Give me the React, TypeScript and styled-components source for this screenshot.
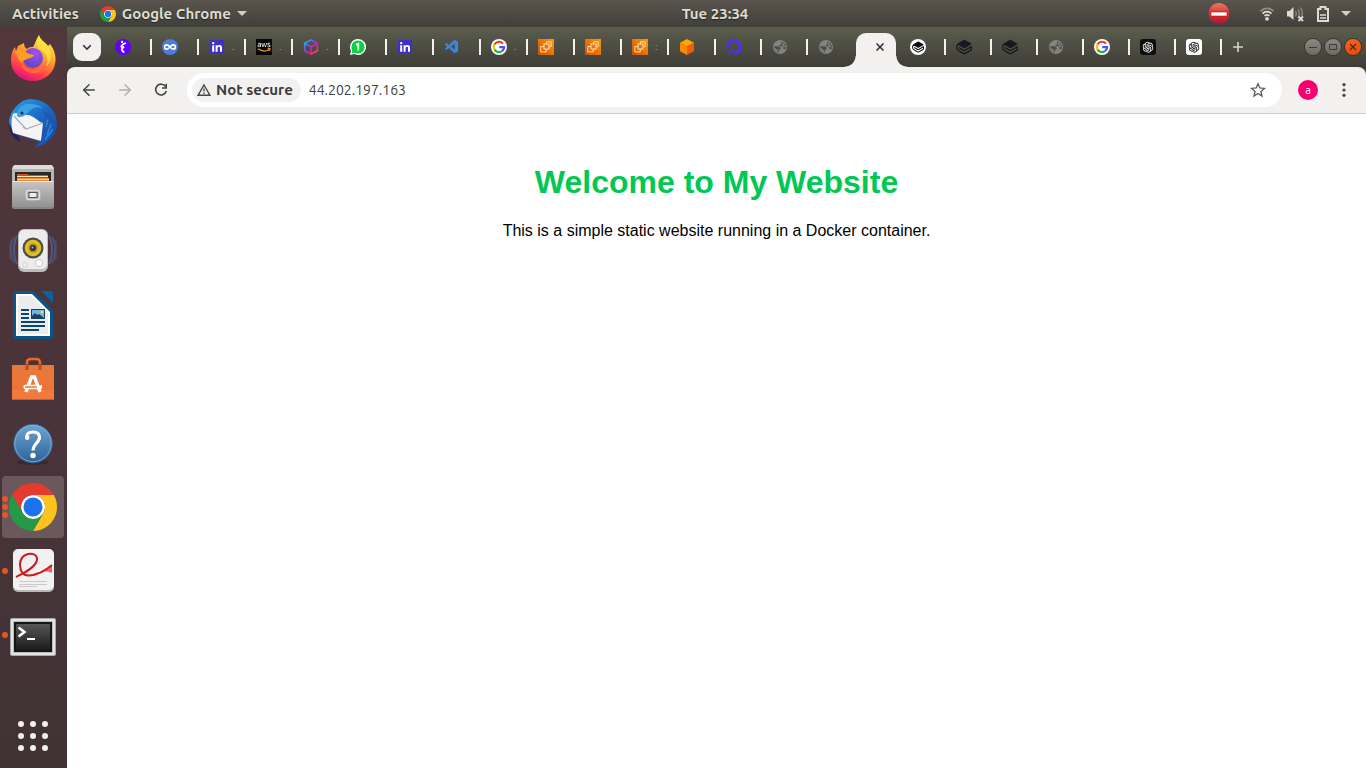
import React from 'react';
import styled, { createGlobalStyle } from 'styled-components';
import { FaAws, FaDigitalOcean } from 'react-icons/fa';
import { SiGitbook } from 'react-icons/si';
import { VscVscode } from 'react-icons/vsc';
import { AiOutlineOpenAI } from 'react-icons/ai';
import { Infinity as InfinityMark, ArrowLeft, ArrowRight } from 'lucide-react';

const GlobalStyle = createGlobalStyle`
  * { box-sizing: border-box; }
  body { margin: 0; background: #fff; }
  button { border: 0; padding: 0; margin: 0; background: none; color: inherit; font: inherit; cursor: pointer; }
  svg { display: block; }
`;

const uiFont = `'Ubuntu', 'Noto Sans', 'Open Sans', sans-serif`;

/* ---------- layout ---------- */

const Desktop = styled.div`
  display: flex;
  flex-direction: column;
  min-height: 100vh;
  font-family: ${uiFont};
`;

const TopBar = styled.header`
  display: flex;
  align-items: center;
  height: 27px;
  background: linear-gradient(#5a554d, #403f3a);
  color: #dfdbd2;
  font-size: 15px;
  font-weight: 600;
  line-height: 20px;
  text-shadow: 0 1px 1px #26241f;
`;

const TopSide = styled.div<{ $end?: boolean }>`
  display: flex;
  flex: 1 1 0;
  align-items: center;
  justify-content: ${(p) => (p.$end ? 'flex-end' : 'flex-start')};
  padding: ${(p) => (p.$end ? '0 15px 0 0' : '0 0 0 12px')};
`;

const TopButton = styled.button`
  display: flex;
  align-items: center;
  gap: 6px;
  margin-right: 21px;
  text-shadow: inherit;
  white-space: nowrap;
`;

const Clock = styled.button`
  padding-left: 67px;
  text-shadow: inherit;
  white-space: nowrap;
`;

const StatusIcon = styled.button<{ $gap: number }>`
  margin-left: ${(p) => p.$gap}px;
`;

const Workspace = styled.div`
  display: flex;
  flex: 1;
`;

const Dock = styled.nav`
  display: flex;
  flex-direction: column;
  flex: 0 0 67px;
  padding-left: 2px;
  background: linear-gradient(#51373a, #49343a 50%, #403235);
`;

const DockItem = styled.button<{ $active?: boolean }>`
  position: relative;
  display: flex;
  align-items: center;
  justify-content: center;
  width: 62px;
  height: 62px;
  margin: 1px 0;
  border-radius: 4px;
  background: ${(p) => (p.$active ? '#6a585d' : 'transparent')};
`;

const Running = styled.span`
  position: absolute;
  left: 0;
  top: 0;
  bottom: 0;
  display: flex;
  flex-direction: column;
  justify-content: center;
  gap: 2px;
`;

const Dot = styled.i`
  width: 6px;
  height: 6px;
  border-radius: 50%;
  background: #e95420;
`;

const AppsButton = styled.button`
  display: grid;
  grid-template-columns: repeat(3, 6px);
  gap: 6px;
  place-content: center;
  width: 62px;
  height: 64px;
  margin-top: auto;
`;

const AppsDot = styled.i`
  width: 6px;
  height: 6px;
  border-radius: 50%;
  background: #f2f1f0;
`;

const Browser = styled.div`
  display: flex;
  flex: 1;
  flex-direction: column;
  min-width: 0;
  background: #3e3d37;
`;

const TabStrip = styled.div`
  display: flex;
  align-items: center;
  height: 40px;
  padding: 0 5px 0 6px;
  background: linear-gradient(#5b5d4d, #3e3d37);
`;

const TabSearch = styled.button`
  display: grid;
  place-items: center;
  flex: 0 0 28px;
  height: 28px;
  margin-right: 4px;
  border-radius: 9px;
  background: #f2f1f0;
`;

const TabList = styled.div`
  display: flex;
  align-items: center;
  height: 40px;
  min-width: 0;
`;

const Tab = styled.button<{ $width: number; $divider: boolean }>`
  display: flex;
  align-items: center;
  width: ${(p) => p.$width}px;
  min-width: 0;
  height: 16px;
  padding-left: 10px;
  border-right: 2px solid ${(p) => (p.$divider ? '#f2f1f0' : 'transparent')};
`;

const Favicon = styled.span`
  display: grid;
  place-items: center;
  flex: 0 0 16px;
  height: 16px;
`;

const TabTitle = styled.span`
  padding-left: 7px;
  color: #a5a59a;
  font-size: 10px;
  line-height: 16px;
`;

const ActiveTab = styled.div`
  position: relative;
  display: flex;
  align-items: center;
  justify-content: flex-end;
  flex: 0 0 40px;
  align-self: flex-end;
  height: 34px;
  margin: 0 4px 0 2px;
  padding: 0 10px 6px 0;
  border-radius: 10px 10px 0 0;
  background: #f2f1f0;

  &::before,
  &::after {
    content: '';
    position: absolute;
    bottom: 0;
    width: 11px;
    height: 11px;
  }
  &::before {
    right: 100%;
    background: radial-gradient(circle at 0 0, transparent 10px, #f2f1f0 11px);
  }
  &::after {
    left: 100%;
    background: radial-gradient(circle at 100% 0, transparent 10px, #f2f1f0 11px);
  }
`;

const NewTab = styled.button`
  display: grid;
  place-items: center;
  flex: 0 0 32px;
  height: 28px;
`;

const WindowControls = styled.div`
  display: flex;
  gap: 4px;
  margin-left: auto;
`;

const WindowButton = styled.button<{ $close?: boolean }>`
  display: grid;
  place-items: center;
  width: 16px;
  height: 16px;
  border-radius: 50%;
  box-shadow: 0 0 0 1px #35342f;
  background: ${(p) => (p.$close ? 'linear-gradient(#f5641c, #e64c0b)' : 'linear-gradient(#8a887f, #6d6b64)')};
`;

const Toolbar = styled.div`
  display: flex;
  align-items: center;
  height: 47px;
  padding: 0 4px;
  border-bottom: 1px solid #cfcecd;
  border-radius: 8px 8px 0 0;
  background: #f2f1f0;
`;

const ToolButton = styled.button<{ $muted?: boolean }>`
  display: grid;
  place-items: center;
  flex: 0 0 36px;
  height: 34px;
  color: ${(p) => (p.$muted ? '#b0afae' : '#454545')};
`;

const Omnibox = styled.form`
  display: flex;
  align-items: center;
  flex: 1;
  min-width: 0;
  height: 34px;
  margin: 0 8px;
  padding: 0 6px 0 5px;
  border-radius: 17px;
  background: #fff;
`;

const SecurityChip = styled.button`
  display: flex;
  align-items: center;
  gap: 5px;
  height: 24px;
  padding: 0 8px 0 5px;
  border-radius: 12px;
  background: #f2f1f0;
  color: #3d3d3d;
  font-size: 15px;
  font-weight: 600;
  line-height: 20px;
  white-space: nowrap;
`;

const UrlField = styled.input`
  flex: 1;
  min-width: 0;
  height: 24px;
  padding: 0 8px;
  border: 0;
  outline: 0;
  background: none;
  color: #3d3d3d;
  font-family: ${uiFont};
  font-size: 14px;
`;

const Avatar = styled.span`
  display: grid;
  place-items: center;
  width: 20px;
  height: 20px;
  border-radius: 50%;
  background: #f6006f;
  color: #fff;
  font-size: 11px;
  line-height: 16px;
`;

const Page = styled.main`
  flex: 1;
  padding: 50px 16px;
  background: #fff;
  font-family: Arial, 'Liberation Sans', sans-serif;
  text-align: center;
`;

const Heading = styled.h1`
  margin: 0 0 21px;
  color: #00c853;
  font-size: 32px;
  line-height: 37px;
`;

const Paragraph = styled.p`
  margin: 0;
  color: #000;
  font-size: 16px;
  line-height: 18px;
`;

/* ---------- shared drawings ---------- */

const ChromeLogo = ({ size }: { size: number }) => (
  <svg width={size} height={size} viewBox="0 0 48 48">
    <circle cx="24" cy="24" r="12" fill="#fff" />
    <path d="M24 12H44.78A24 24 0 0 0 3.22 12L13.61 30A12 12 0 0 1 24 12Z" fill="#e33b2e" />
    <path d="M34.39 30L24 48A24 24 0 0 0 44.78 12H24A12 12 0 0 1 34.39 30Z" fill="#fcc31e" />
    <path d="M13.61 30L3.22 12A24 24 0 0 0 24 48L34.39 30A12 12 0 0 1 13.61 30Z" fill="#249a46" />
    <circle cx="24" cy="24" r="9.5" fill="#1a73e8" />
  </svg>
);

const Caret = () => (
  <svg width="10" height="5" viewBox="0 0 10 5"><path d="M0 0H10L5 5Z" fill="#d3cfc7" /></svg>
);

/* ---------- favicons ---------- */

const PurpleMark = () => (
  <svg width="16" height="16" viewBox="0 0 16 16">
    <circle cx="8" cy="8" r="8" fill="#6200ff" />
    <circle cx="7" cy="3" r="1.2" fill="#fff" />
    <path d="M10.8 4C8.6 5 6.400 6 6.300 7.300C6.300 8.300 7.600 8.300 9 8C7.300 9 6.500 9.800 6.900 11C7.300 12 8.400 12.400 9 13.600" fill="none" stroke="#fff" strokeWidth="1.900" />
  </svg>
);

const InfinityIcon = () => (
  <svg width="16" height="16" viewBox="0 0 16 16">
    <circle cx="8" cy="8" r="8" fill="#4f7bdb" />
    <InfinityMark x="1.5" y="1.5" width="13" height="13" color="#fff" strokeWidth={3} />
  </svg>
);

const LinkedInIcon = () => (
  <svg width="14" height="14" viewBox="0 0 14 14">
    <rect width="14" height="14" fill="#3d31c4" />
    <circle cx="3.2" cy="3.1" r="1.2" fill="#fff" />
    <path d="M2.2 5.2H4.2V11.8H2.2ZM5.6 5.2H7.5V6.1C8 5.3 8.7 5 9.6 5C11.4 5 12 6.2 12 8V11.8H10V8.4C10 7.4 9.8 6.8 9 6.8C8 6.8 7.6 7.5 7.6 8.4V11.8H5.6Z" fill="#fff" />
  </svg>
);

const AwsIcon = () => (
  <svg width="16" height="16" viewBox="0 0 16 16">
    <rect width="16" height="16" fill="#050505" />
    <FaAws x="1" y="1" size={14} color="#fff" />
    <rect y="8.800" width="16" height="6" fill="#050505" />
    <path d="M2 9.800C5.500 12.400 10 12.400 13 10.700M11.600 9.600L14 9.700L13.400 11.800" fill="none" stroke="#f7981d" strokeWidth="1.200" />
  </svg>
);

const CubeOutline = () => (
  <svg width="16" height="16" viewBox="0 0 16 16">
    <defs>
      <linearGradient id="cubeEdge" x1="0" y1="0" x2="1" y2="1">
        <stop offset="0" stopColor="#12c8e8" />
        <stop offset=".42" stopColor="#8a3ff0" />
        <stop offset=".65" stopColor="#f0149c" />
        <stop offset="1" stopColor="#ff5a3c" />
      </linearGradient>
    </defs>
    <path d="M8 1L14.3 4.3V11.7L8 15L1.7 11.7V4.3ZM1.7 4.5L8 7.8L14.3 4.5M8 7.8V15" fill="none" stroke="url(#cubeEdge)" strokeWidth="1.6" strokeLinejoin="round" />
  </svg>
);

const WhatsAppIcon = () => (
  <svg width="16" height="16" viewBox="0 0 16 16">
    <path d="M8 0A8 8 0 1 1 4.4 15.1L0 16L1 11.8A8 8 0 0 1 8 0Z" fill="#fff" />
    <circle cx="8" cy="8" r="6.6" fill="#06d33f" />
    <path d="M1.6 14.5L2.4 11L5 13.6Z" fill="#06d33f" />
    <path d="M6 5.8L8.3 4.8V11.5" fill="none" stroke="#fff" strokeWidth="1.8" />
  </svg>
);

const CodeIcon = () => <VscVscode size={16} color="#3a85e0" />;

const GoogleIcon = () => (
  <svg width="16" height="16" viewBox="0 0 16 16">
    <circle cx="8" cy="8" r="8" fill="#fff" />
    <g fill="none" strokeWidth="2.2">
      <path d="M12 4.6A5.1 5.1 0 0 0 3.6 5.4" stroke="#f0342c" />
      <path d="M3.6 5.4A5.1 5.1 0 0 0 3.6 10.6" stroke="#f9c200" />
      <path d="M3.6 10.6A5.1 5.1 0 0 0 11 12.1" stroke="#1eb446" />
      <path d="M11 12.1A5.1 5.1 0 0 0 13.1 8.1H8.2" stroke="#5a4cf0" />
    </g>
  </svg>
);

const Ec2Icon = () => (
  <svg width="16" height="16" viewBox="0 0 16 16">
    <defs>
      <linearGradient id="ec2Fill" x1="0" y1="1" x2="1" y2="0">
        <stop offset="0" stopColor="#cf5008" />
        <stop offset="1" stopColor="#ff9b05" />
      </linearGradient>
    </defs>
    <rect width="16" height="16" fill="url(#ec2Fill)" />
    <g fill="none" stroke="#ffe0b0" strokeWidth="1">
      <rect x="6" y="5" width="5" height="5" />
      <path d="M8.5 5V2.8H13.2V7.6H11M6 7.6H2.8V12.9H8.2V10" />
    </g>
  </svg>
);

const OrangeCube = () => (
  <svg width="16" height="16" viewBox="0 0 16 16">
    <path d="M8 0L15 3.8L8 7.6L1 3.8Z" fill="#ffa400" />
    <path d="M1 3.8L8 7.6V16L1 12.2Z" fill="#ff8a00" />
    <path d="M15 3.8L8 7.6V16L15 12.2Z" fill="#f35b00" />
  </svg>
);

const OceanIcon = () => (
  <svg width="16" height="16" viewBox="0 0 16 16">
    <FaDigitalOcean size={16} color="#4b31f4" />
  </svg>
);

const GlobeIcon = () => (
  <svg width="16" height="16" viewBox="0 0 16 16">
    <circle cx="8" cy="8" r="7" fill="#83837f" />
    <path d="M2.300 7.200H6.200C8 7.200 8.600 8.200 8.600 9.300C8.600 10.400 7.800 10.800 6.800 10.800V13.400C4 12.900 2.100 10.500 2.300 7.200Z" fill="#4e4e48" />
    <path d="M9.300 2.400C12 2.900 13.800 5.200 13.800 8C13.800 9 13.600 9.900 13.200 10.600C12.700 10 12 9.900 11.400 9.900V8.700C11.400 7.600 10.800 7.300 9.900 7.300H7.700V5.900C8.800 5.900 9.300 5.300 9.300 4.400Z" fill="#4e4e48" />
    <path d="M2.900 9.600L5.300 11.900V12.800M10.700 3.600L10.800 5.200L12.600 8" fill="none" stroke="#83837f" strokeWidth="1.400" />
  </svg>
);

const BookIcon = () => <SiGitbook size={16} color="#161a1e" />;

const BookRound = () => (
  <svg width="16" height="16" viewBox="0 0 16 16">
    <circle cx="8" cy="8" r="8" fill="#fff" />
    <SiGitbook x="2" y="2" size={12} color="#0c0f12" />
  </svg>
);

const AiIcon = ({ dark }: { dark?: boolean }) => (
  <svg width="16" height="16" viewBox="0 0 16 16">
    <rect width="16" height="16" rx="3" fill={dark ? '#0d0d0d' : '#fff'} />
    <AiOutlineOpenAI x="1" y="1" size={14} color={dark ? '#f4f4f4' : '#111'} />
  </svg>
);

/* ---------- dock icons ---------- */

const FirefoxIcon = () => (
  <svg width="48" height="48" viewBox="0 0 48 48">
    <defs>
      <linearGradient id="ffFlame" x1=".8" y1="0" x2=".35" y2="1">
        <stop offset="0" stopColor="#fff44f" />
        <stop offset=".35" stopColor="#ffb52e" />
        <stop offset=".62" stopColor="#ff6a3d" />
        <stop offset=".82" stopColor="#ff3552" />
        <stop offset="1" stopColor="#dd1088" />
      </linearGradient>
      <radialGradient id="ffGlobe" cx=".65" cy=".25" r=".8">
        <stop offset="0" stopColor="#a251f5" />
        <stop offset="1" stopColor="#5a45c0" />
      </radialGradient>
    </defs>
    <path d="M30 0C31 5 36 7 39 11L41 9C45 14 47 20 46.500 26C45.500 38 36 46 24 46C11 46 2 37 2 25C2 19 4 14 6 12L7 16L9 11L15 8C15 11 16 13 18 14C20 12 22 12 24 12C26 9 27 4 30 0Z" fill="url(#ffFlame)" />
    <path d="M30 0C31 5 36 7 39 11C43 17 43 26 37 32C41 24 36 16 31 14C28 12 27 6 30 0Z" fill="#ffe640" opacity=".8" />
    <circle cx="24" cy="23" r="10" fill="url(#ffGlobe)" />
    <path d="M6 17C10 14 14 14 17 17C19 19 22 19 25 20C24 23 20 23 18 24C15 26 13 25 13 29C10 26 9 22 6 17Z" fill="#ff9d25" />
    <path d="M13 25C13 31 18 35 24 35C29 35 33 32 35 28C35 35 29 39 23 38C16 37 11 32 13 25Z" fill="#ff6a3d" />
  </svg>
);

const ThunderbirdIcon = () => (
  <svg width="48" height="48" viewBox="0 0 48 48">
    <defs>
      <linearGradient id="tbBody" x1="0" y1="0" x2="1" y2="1">
        <stop offset="0" stopColor="#2ba2e8" />
        <stop offset=".5" stopColor="#1d68c4" />
        <stop offset="1" stopColor="#1c3c93" />
      </linearGradient>
    </defs>
    <path d="M20 0C38 0 48 12 48 25C48 37 39 45 30 47L25 48L31 43L4 34C1 30 0 25 0 22C1 14 6 8 11 4C14 1 17 1 20 0Z" fill="url(#tbBody)" />
    <path d="M0 24C0 36 6 41 12 43L9 37L4 33Z" fill="#25205f" />
    <path d="M4 15C8 12 12 17 17 16C24 15 29 23 34 24L32 42L4 34C2 27 2 20 4 15Z" fill="#f4f4f6" />
    <path d="M5 17L17 30L34 24M17 30L14 28" fill="none" stroke="#a9abb3" strokeWidth="1.200" />
    <path d="M8 17C8 5 21 1 34 9C22 6 20 14 15 17C12 18 10 19 8 17Z" fill="#3ba3e2" />
    <path d="M34 12C40 20 37 32 31 43L27 48C36 45 44 39 45 27C45 20 41 14 34 12Z" fill="#1a58b4" />
    <path d="M39 20L37 28M42 25L38 36M44 30L36 41" stroke="#2c83d6" strokeWidth="1.500" />
    <circle cx="13" cy="14" r="1.500" fill="#17254a" />
  </svg>
);

const FilesIcon = () => (
  <svg width="48" height="48" viewBox="0 0 48 48">
    <defs>
      <linearGradient id="cabinet" x1="0" y1="0" x2="0" y2="1">
        <stop offset="0" stopColor="#c6c6c6" />
        <stop offset="1" stopColor="#929292" />
      </linearGradient>
    </defs>
    <rect x="3" y="3" width="42" height="43" rx="2" fill="#858585" />
    <path d="M5 2H43L45 6H3Z" fill="#dcdcdc" />
    <rect x="3" y="6" width="42" height="14" fill="#b5b5b5" />
    <rect x="6" y="9" width="36" height="11" fill="#2d2926" />
    <path d="M8 11H18L20 12H39V19H8Z" fill="#c9501c" />
    <path d="M8 15H40V19H8Z" fill="#f08a35" />
    <path d="M8 13.500H39M8 16.500H40" stroke="#ffdcae" strokeWidth="1" />
    <rect x="3" y="18" width="42" height="26" rx="1" fill="url(#cabinet)" />
    <path d="M4 18.500H44" stroke="#ececec" />
    <rect x="17.500" y="27.500" width="13" height="9" rx="2" fill="#aaa" stroke="#dedede" strokeWidth="1.500" />
    <rect x="20" y="29.500" width="8" height="5" fill="#ededed" stroke="#555" />
  </svg>
);

const MusicIcon = () => (
  <svg width="48" height="48" viewBox="0 0 48 48">
    <g fill="none" stroke="#52679f" strokeWidth="2">
      <path d="M8 9C4 17 4 29 8 37M40 9C44 17 44 29 40 37" opacity=".7" />
      <path d="M5 10C1 17 1 29 5 36M43 10C47 17 47 29 43 36" opacity=".5" />
      <path d="M2 13C0 18 0 28 2 33M46 13C48 18 48 28 46 33" opacity=".3" />
    </g>
    <rect x="9" y="2" width="30" height="43" rx="6" fill="#bcbcbc" />
    <rect x="10" y="3" width="28" height="39" rx="5" fill="#ececec" />
    <circle cx="24" cy="21" r="10.500" fill="#4c4c4e" />
    <circle cx="24" cy="21" r="8.300" fill="#dcbd22" />
    <circle cx="24" cy="21" r="4.500" fill="#a88d18" />
    <circle cx="24" cy="21" r="3" fill="#303340" />
    <circle cx="23.500" cy="20.500" r="1" fill="#b0b4c0" />
    <circle cx="30" cy="36" r="3.500" fill="#fff" stroke="#c6c6c6" />
    <circle cx="16" cy="38" r="2.500" fill="none" stroke="#d5d5d5" />
  </svg>
);

const WriterIcon = () => (
  <svg width="48" height="48" viewBox="0 0 48 48">
    <path d="M7 0H24L44 19V45Q44 48 41 48H7Q4 48 4 45V3Q4 0 7 0Z" fill="#0b5488" />
    <path d="M32 0H41Q44 0 44 3V12Z" fill="#0d629e" />
    <path d="M7 3H23L41 21V45H7Z" fill="#fff" />
    <path d="M9 5H22L39 22V43H9Z" fill="#ececec" />
    <path d="M12 19H20M12 23H20M12 27H20M12 31H36M12 35H36M12 39H30" stroke="#0d4571" strokeWidth="2" />
    <rect x="22.500" y="18.500" width="13" height="9" fill="#6fb6e8" stroke="#0d4571" />
    <circle cx="33" cy="21" r="1.500" fill="#f8d84c" />
    <path d="M23 27V25L26 22L28 24L30 23L35 27Z" fill="#233c4e" />
  </svg>
);

const SoftwareIcon = () => (
  <svg width="48" height="48" viewBox="0 0 48 48">
    <defs>
      <linearGradient id="bagFill" x1="0" y1="0" x2="0" y2="1">
        <stop offset="0" stopColor="#e57a3f" />
        <stop offset="1" stopColor="#f3712f" />
      </linearGradient>
    </defs>
    <rect x="3" y="10" width="42" height="35" rx="1" fill="url(#bagFill)" />
    <path d="M3 35H45V44H3Z" fill="#f47f42" opacity=".6" />
    <path d="M3 44.500H45" stroke="#cf5a22" />
    <path d="M18 15V8Q18 4 22 4H27Q31 4 31 8V15" fill="none" stroke="#c24a1b" strokeWidth="3" />
    <path d="M18 9V7Q18 4 22 4H27Q31 4 31 7V9" fill="none" stroke="#e8743c" strokeWidth="1.500" />
    <path d="M17 37L22.500 22H25.500L31 37M15 32H33" fill="none" stroke="#fff" strokeWidth="3.500" />
    <path d="M16 32H28" stroke="#ed7434" strokeWidth="2" />
    <rect x="15" y="30.500" width="14" height="3" rx="1.500" fill="none" stroke="#fff" strokeWidth="1.300" />
  </svg>
);

const HelpIcon = () => (
  <svg width="48" height="48" viewBox="0 0 48 48">
    <defs>
      <linearGradient id="helpFill" x1="0" y1="0" x2="0" y2="1">
        <stop offset="0" stopColor="#6fa5d3" />
        <stop offset="1" stopColor="#2b6496" />
      </linearGradient>
    </defs>
    <ellipse cx="24" cy="43" rx="16" ry="3" fill="#2a2024" opacity=".5" />
    <circle cx="24" cy="24.500" r="19.300" fill="url(#helpFill)" stroke="#2f6494" />
    <circle cx="24" cy="24.500" r="18.200" fill="none" stroke="#86b4dc" strokeWidth=".8" />
    <path d="M17.500 18.500C17.500 15 20 13 24 13C28.500 13 30.500 15.500 30.500 18.500C30.500 23 24 25 24 31.500" fill="none" stroke="#fff" strokeWidth="3" />
    <path d="M29 14.500C32 18 30.500 22 27 25" fill="none" stroke="#fff" strokeWidth="2.500" />
    <circle cx="18.200" cy="18.800" r="2.200" fill="#fff" />
    <circle cx="24" cy="36.500" r="2.700" fill="#fff" />
  </svg>
);

const DocumentIcon = () => (
  <svg width="48" height="48" viewBox="0 0 48 48">
    <rect x="4" y="3" width="41" height="42" rx="5" fill="#b9b9b9" />
    <rect x="4" y="2" width="41" height="41" rx="5" fill="#f1f1f1" />
    <path d="M19 29C28 29 36 25 43 18V26C36 23 27 25 19 29Z" fill="#e56a68" />
    <path d="M7 30C13 27 29 20 28 11C27 4 11 5 11 18C11 24 14 29 20 28.500C28 28 36 24 43 18" fill="none" stroke="#cf1a1e" strokeWidth="2" />
    <path d="M10 34.500H38M10 37.500H38M10 39.500H28" stroke="#c9c9c9" strokeWidth="1" />
  </svg>
);

const TerminalIcon = () => (
  <svg width="48" height="48" viewBox="0 0 48 48">
    <defs>
      <linearGradient id="screen" x1="0" y1="0" x2="0" y2="1">
        <stop offset="0" stopColor="#565656" />
        <stop offset="1" stopColor="#1c1c1c" />
      </linearGradient>
    </defs>
    <rect x="1" y="7" width="46" height="38" rx="2" fill="#a8a8a8" />
    <rect x="2" y="8" width="44" height="36" rx="1" fill="#e4e4e4" />
    <rect x="4" y="10" width="40" height="32" fill="#bcbcbc" />
    <rect x="5" y="11" width="38" height="30" fill="#161616" />
    <rect x="7" y="13" width="34" height="26" fill="url(#screen)" />
    <path d="M9.500 16.500L15.500 21L9.500 25.500" fill="none" stroke="#fff" strokeWidth="2.600" />
    <path d="M18 28H26" stroke="#fff" strokeWidth="2" />
  </svg>
);

/* ---------- data ---------- */

type TabInfo = { name: string; icon: React.ReactNode; title?: string; last?: boolean; width?: number };

const tabsBefore: TabInfo[] = [
  { name: 'Course', icon: <PurpleMark /> },
  { name: 'DevOps', icon: <InfinityIcon /> },
  { name: 'LinkedIn', icon: <LinkedInIcon />, title: '.' },
  { name: 'AWS', icon: <AwsIcon />, title: '.' },
  { name: 'Packages', icon: <CubeOutline />, title: '.' },
  { name: 'WhatsApp', icon: <WhatsAppIcon /> },
  { name: 'LinkedIn feed', icon: <LinkedInIcon /> },
  { name: 'Visual Studio Code', icon: <CodeIcon /> },
  { name: 'Google', icon: <GoogleIcon />, title: '.' },
  { name: 'EC2 instances', icon: <Ec2Icon /> },
  { name: 'EC2 security groups', icon: <Ec2Icon /> },
  { name: 'EC2 connect', icon: <Ec2Icon />, title: ':' },
  { name: 'Containers', icon: <OrangeCube /> },
  { name: 'DigitalOcean', icon: <OceanIcon />, width: 46 },
  { name: 'Site', icon: <GlobeIcon />, width: 46 },
  { name: 'Site', icon: <GlobeIcon />, width: 46, last: true },
];

const tabsAfter: TabInfo[] = [
  { name: 'GitBook', icon: <BookRound /> },
  { name: 'Documentation', icon: <BookIcon /> },
  { name: 'Documentation', icon: <BookIcon /> },
  { name: 'Site', icon: <GlobeIcon /> },
  { name: 'Google', icon: <GoogleIcon /> },
  { name: 'ChatGPT', icon: <AiIcon dark /> },
  { name: 'OpenAI', icon: <AiIcon /> },
];

const dockApps = [
  { name: 'Firefox', icon: <FirefoxIcon />, windows: 0 },
  { name: 'Thunderbird Mail', icon: <ThunderbirdIcon />, windows: 0 },
  { name: 'Files', icon: <FilesIcon />, windows: 0 },
  { name: 'Rhythmbox', icon: <MusicIcon />, windows: 0 },
  { name: 'LibreOffice Writer', icon: <WriterIcon />, windows: 0 },
  { name: 'Ubuntu Software', icon: <SoftwareIcon />, windows: 0 },
  { name: 'Help', icon: <HelpIcon />, windows: 0 },
  { name: 'Google Chrome', icon: <ChromeLogo size={48} />, windows: 3, active: true },
  { name: 'Document Viewer', icon: <DocumentIcon />, windows: 1 },
  { name: 'Terminal', icon: <TerminalIcon />, windows: 1 },
];

const renderTab = (tab: TabInfo, index: number, width: number) => (
  <Tab key={index} role="tab" aria-selected="false" aria-label={tab.name} $width={tab.width ?? width} $divider={!tab.last}>
    <Favicon>{tab.icon}</Favicon>
    {tab.title && <TabTitle>{tab.title}</TabTitle>}
  </Tab>
);

/* ---------- app ---------- */

export default function App() {
  return (
    <>
      <GlobalStyle />
      <Desktop>
        <TopBar>
          <TopSide>
            <TopButton>Activities</TopButton>
            <TopButton>
              <ChromeLogo size={16} />
              Google Chrome
              <Caret />
            </TopButton>
          </TopSide>
          <Clock>Tue 23:34</Clock>
          <TopSide $end>
            <StatusIcon $gap={0} aria-label="Do not disturb">
              <svg width="22" height="22" viewBox="0 0 22 22">
                <defs>
                  <linearGradient id="stop" x1="0" y1="0" x2="0" y2="1">
                    <stop offset="0" stopColor="#ee7a66" />
                    <stop offset=".5" stopColor="#d8322c" />
                    <stop offset="1" stopColor="#b3123a" />
                  </linearGradient>
                </defs>
                <circle cx="11" cy="10.500" r="10.500" fill="url(#stop)" />
                <rect x="3" y="9" width="16" height="4" fill="#fff" stroke="#a32020" strokeWidth=".6" />
              </svg>
            </StatusIcon>
            <StatusIcon $gap={30} aria-label="Wi-Fi">
              <svg width="14" height="14" viewBox="0 0 14 14" fill="none" strokeWidth="1.700">
                <path d="M.5 4.200C4 .3 10 .3 13.500 4.200" stroke="#918e87" />
                <path d="M2.500 6.600C5 4 9 4 11.500 6.600M4.500 9C6 7.600 8 7.600 9.500 9" stroke="#dfdbd2" />
                <circle cx="7" cy="11.800" r="1.900" fill="#dfdbd2" />
              </svg>
            </StatusIcon>
            <StatusIcon $gap={13} aria-label="Volume muted">
              <svg width="17" height="16" viewBox="0 0 17 16" fill="none">
                <path d="M0 5H2.500L6.500 1V14L2.500 10.500H0Z" fill="#dfdbd2" />
                <path d="M8.500 5Q10 7.500 8.500 10.500M11 3Q13.500 7.500 11 12M13.500 1.500Q16.500 6 14.500 10" stroke="#918e87" strokeWidth="1.300" />
                <path d="M11.500 10.500L16 15M16 10.500L11.500 15" stroke="#dfdbd2" strokeWidth="2" />
              </svg>
            </StatusIcon>
            <StatusIcon $gap={13} aria-label="Battery">
              <svg width="12" height="16" viewBox="0 0 12 16" fill="none" stroke="#dfdbd2">
                <path d="M1 3H3.500V1H8.500V3H11V15H1Z" strokeWidth="2" />
                <path d="M3 9H9M3 12H9" strokeWidth="1.600" />
              </svg>
            </StatusIcon>
            <StatusIcon $gap={12} aria-label="System menu">
              <Caret />
            </StatusIcon>
          </TopSide>
        </TopBar>
        <Workspace>
          <Dock aria-label="Applications">
            {dockApps.map((app) => (
              <DockItem key={app.name} aria-label={app.name} $active={app.active}>
                {app.windows > 0 && (
                  <Running>
                    {Array.from({ length: app.windows }, (_, i) => <Dot key={i} />)}
                  </Running>
                )}
                {app.icon}
              </DockItem>
            ))}
            <AppsButton aria-label="Show Applications">
              {Array.from({ length: 9 }, (_, i) => <AppsDot key={i} />)}
            </AppsButton>
          </Dock>
          <Browser>
            <TabStrip>
              <TabSearch aria-label="Search tabs">
                <svg width="10" height="10" viewBox="0 0 10 10"><path d="M1.200 3.200L5 7L8.800 3.200" fill="none" stroke="#333" strokeWidth="1.600" /></svg>
              </TabSearch>
              <TabList role="tablist">
                {tabsBefore.map((tab, i) => renderTab(tab, i, 47))}
                <ActiveTab role="tab" aria-selected="true" aria-label="My Website">
                  <button aria-label="Close tab">
                    <svg width="12" height="12" viewBox="0 0 12 12"><path d="M2.500 2.500L9.500 9.500M9.500 2.500L2.500 9.500" stroke="#333" strokeWidth="1.600" /></svg>
                  </button>
                </ActiveTab>
                {tabsAfter.map((tab, i) => renderTab(tab, i, 46))}
              </TabList>
              <NewTab aria-label="New tab">
                <svg width="10" height="10" viewBox="0 0 10 10"><path d="M5 0V10M0 5H10" stroke="#d5d4c8" strokeWidth="1.600" /></svg>
              </NewTab>
              <WindowControls>
                <WindowButton aria-label="Minimize">
                  <svg width="8" height="8" viewBox="0 0 8 8"><path d="M0 4.500H8" stroke="#3c3b37" /></svg>
                </WindowButton>
                <WindowButton aria-label="Maximize">
                  <svg width="8" height="6" viewBox="0 0 8 6"><path d="M.5 .5H7.500V5.500H.5Z" fill="none" stroke="#3c3b37" /></svg>
                </WindowButton>
                <WindowButton $close aria-label="Close">
                  <svg width="8" height="8" viewBox="0 0 8 8"><path d="M1 1L7 7M7 1L1 7" stroke="#5a2008" strokeWidth="1.200" /></svg>
                </WindowButton>
              </WindowControls>
            </TabStrip>
            <Toolbar>
              <ToolButton aria-label="Back"><ArrowLeft size={18} /></ToolButton>
              <ToolButton aria-label="Forward" $muted><ArrowRight size={18} /></ToolButton>
              <ToolButton aria-label="Reload">
                <svg width="14" height="14" viewBox="0 0 14 14">
                  <path d="M11.600 3.600A5.400 5.400 0 1 0 12.300 8" fill="none" stroke="#454545" strokeWidth="1.600" />
                  <path d="M12.200 .8V5H8" fill="none" stroke="#454545" strokeWidth="1.600" />
                </svg>
              </ToolButton>
              <Omnibox onSubmit={(e) => e.preventDefault()}>
                <SecurityChip type="button">
                  <svg width="14" height="14" viewBox="0 0 14 14">
                    <path d="M7 2L13 12.300H1Z" fill="none" stroke="#454545" strokeWidth="1.400" />
                    <path d="M7 5.500V8.600M7 9.600V11" stroke="#454545" strokeWidth="1.300" />
                  </svg>
                  Not secure
                </SecurityChip>
                <UrlField aria-label="Address" defaultValue="44.202.197.163" />
                <ToolButton type="button" aria-label="Bookmark this tab">
                  <svg width="16" height="16" viewBox="0 0 16 16">
                    <path d="M8 1.700L9.800 6L14.500 6.400L10.900 9.400L12 14L8 11.500L4 14L5.100 9.400L1.500 6.400L6.200 6Z" fill="none" stroke="#5a5a5a" strokeWidth="1.300" />
                  </svg>
                </ToolButton>
              </Omnibox>
              <ToolButton aria-label="Profile"><Avatar>a</Avatar></ToolButton>
              <ToolButton aria-label="Menu">
                <svg width="4" height="14" viewBox="0 0 4 14" fill="#454545">
                  <circle cx="2" cy="1.700" r="1.600" /><circle cx="2" cy="7" r="1.600" /><circle cx="2" cy="12.300" r="1.600" />
                </svg>
              </ToolButton>
            </Toolbar>
            <Page>
              <Heading>Welcome to My Website</Heading>
              <Paragraph>This is a simple static website running in a Docker container.</Paragraph>
            </Page>
          </Browser>
        </Workspace>
      </Desktop>
    </>
  );
}
